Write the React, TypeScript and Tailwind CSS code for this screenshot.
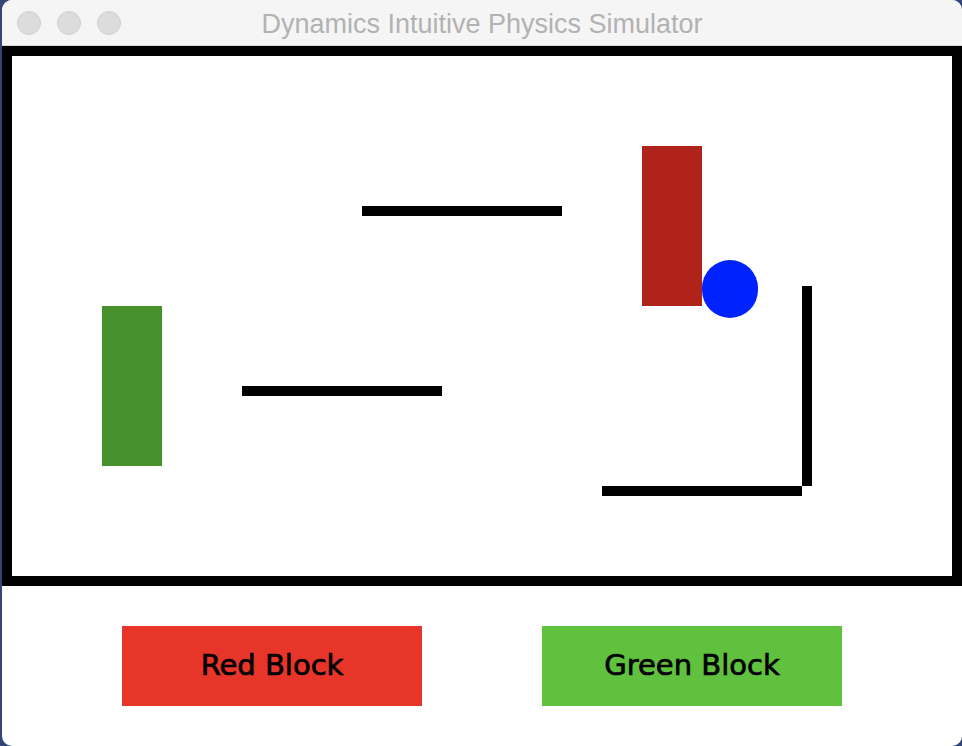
import React from "react";

export default function App() {
  return (
    <div className="w-[962px] h-[746px] bg-[#34457a] overflow-hidden">
      <div className="ml-[2px] w-[960px] h-[746px] bg-white rounded-[10px] overflow-hidden flex flex-col">
        <div className="relative h-[46px] bg-[#f5f5f5] border-b border-[#d8d8d8] flex items-center justify-center shrink-0 pt-[3px]">
          <div className="absolute left-[15px] top-[11px] flex gap-[16px]">
            <div className="w-[24px] h-[24px] rounded-full bg-[#dcdcdc] border border-[#d0d0d0]" />
            <div className="w-[24px] h-[24px] rounded-full bg-[#dcdcdc] border border-[#d0d0d0]" />
            <div className="w-[24px] h-[24px] rounded-full bg-[#dcdcdc] border border-[#d0d0d0]" />
          </div>
          <span className="text-[27px] leading-none text-[#b2b2b2] font-['Liberation_Sans',sans-serif]">
            Dynamics Intuitive Physics Simulator
          </span>
        </div>
        <div className="w-[960px] h-[540px] border-[10px] border-black bg-white shrink-0">
          <div className="relative w-[940px] h-[520px]">
            <div className="absolute left-[630px] top-[90px] w-[60px] h-[160px] bg-[#b0231b]" />
            <div className="absolute left-[690px] top-[204px] w-[56px] h-[58px] rounded-full bg-[#0022ff]" />
            <div className="absolute left-[350px] top-[150px] w-[200px] h-[10px] bg-black" />
            <div className="absolute left-[230px] top-[330px] w-[200px] h-[10px] bg-black" />
            <div className="absolute left-[790px] top-[230px] w-[10px] h-[200px] bg-black" />
            <div className="absolute left-[590px] top-[430px] w-[200px] h-[10px] bg-black" />
            <div className="absolute left-[90px] top-[250px] w-[60px] h-[160px] bg-[#46912b]" />
          </div>
        </div>
        <div className="flex pt-[40px] pl-[120px] gap-[120px]">
          <div className="w-[300px] h-[80px] bg-[#e8352a] flex items-center justify-center">
            <span className="text-[29px] text-black font-['DejaVu_Sans',sans-serif] [-webkit-text-stroke:0.7px_black]">Red Block</span>
          </div>
          <div className="w-[300px] h-[80px] bg-[#60c13f] flex items-center justify-center">
            <span className="text-[29px] text-black font-['DejaVu_Sans',sans-serif] [-webkit-text-stroke:0.7px_black]">Green Block</span>
          </div>
        </div>
      </div>
    </div>
  );
}
